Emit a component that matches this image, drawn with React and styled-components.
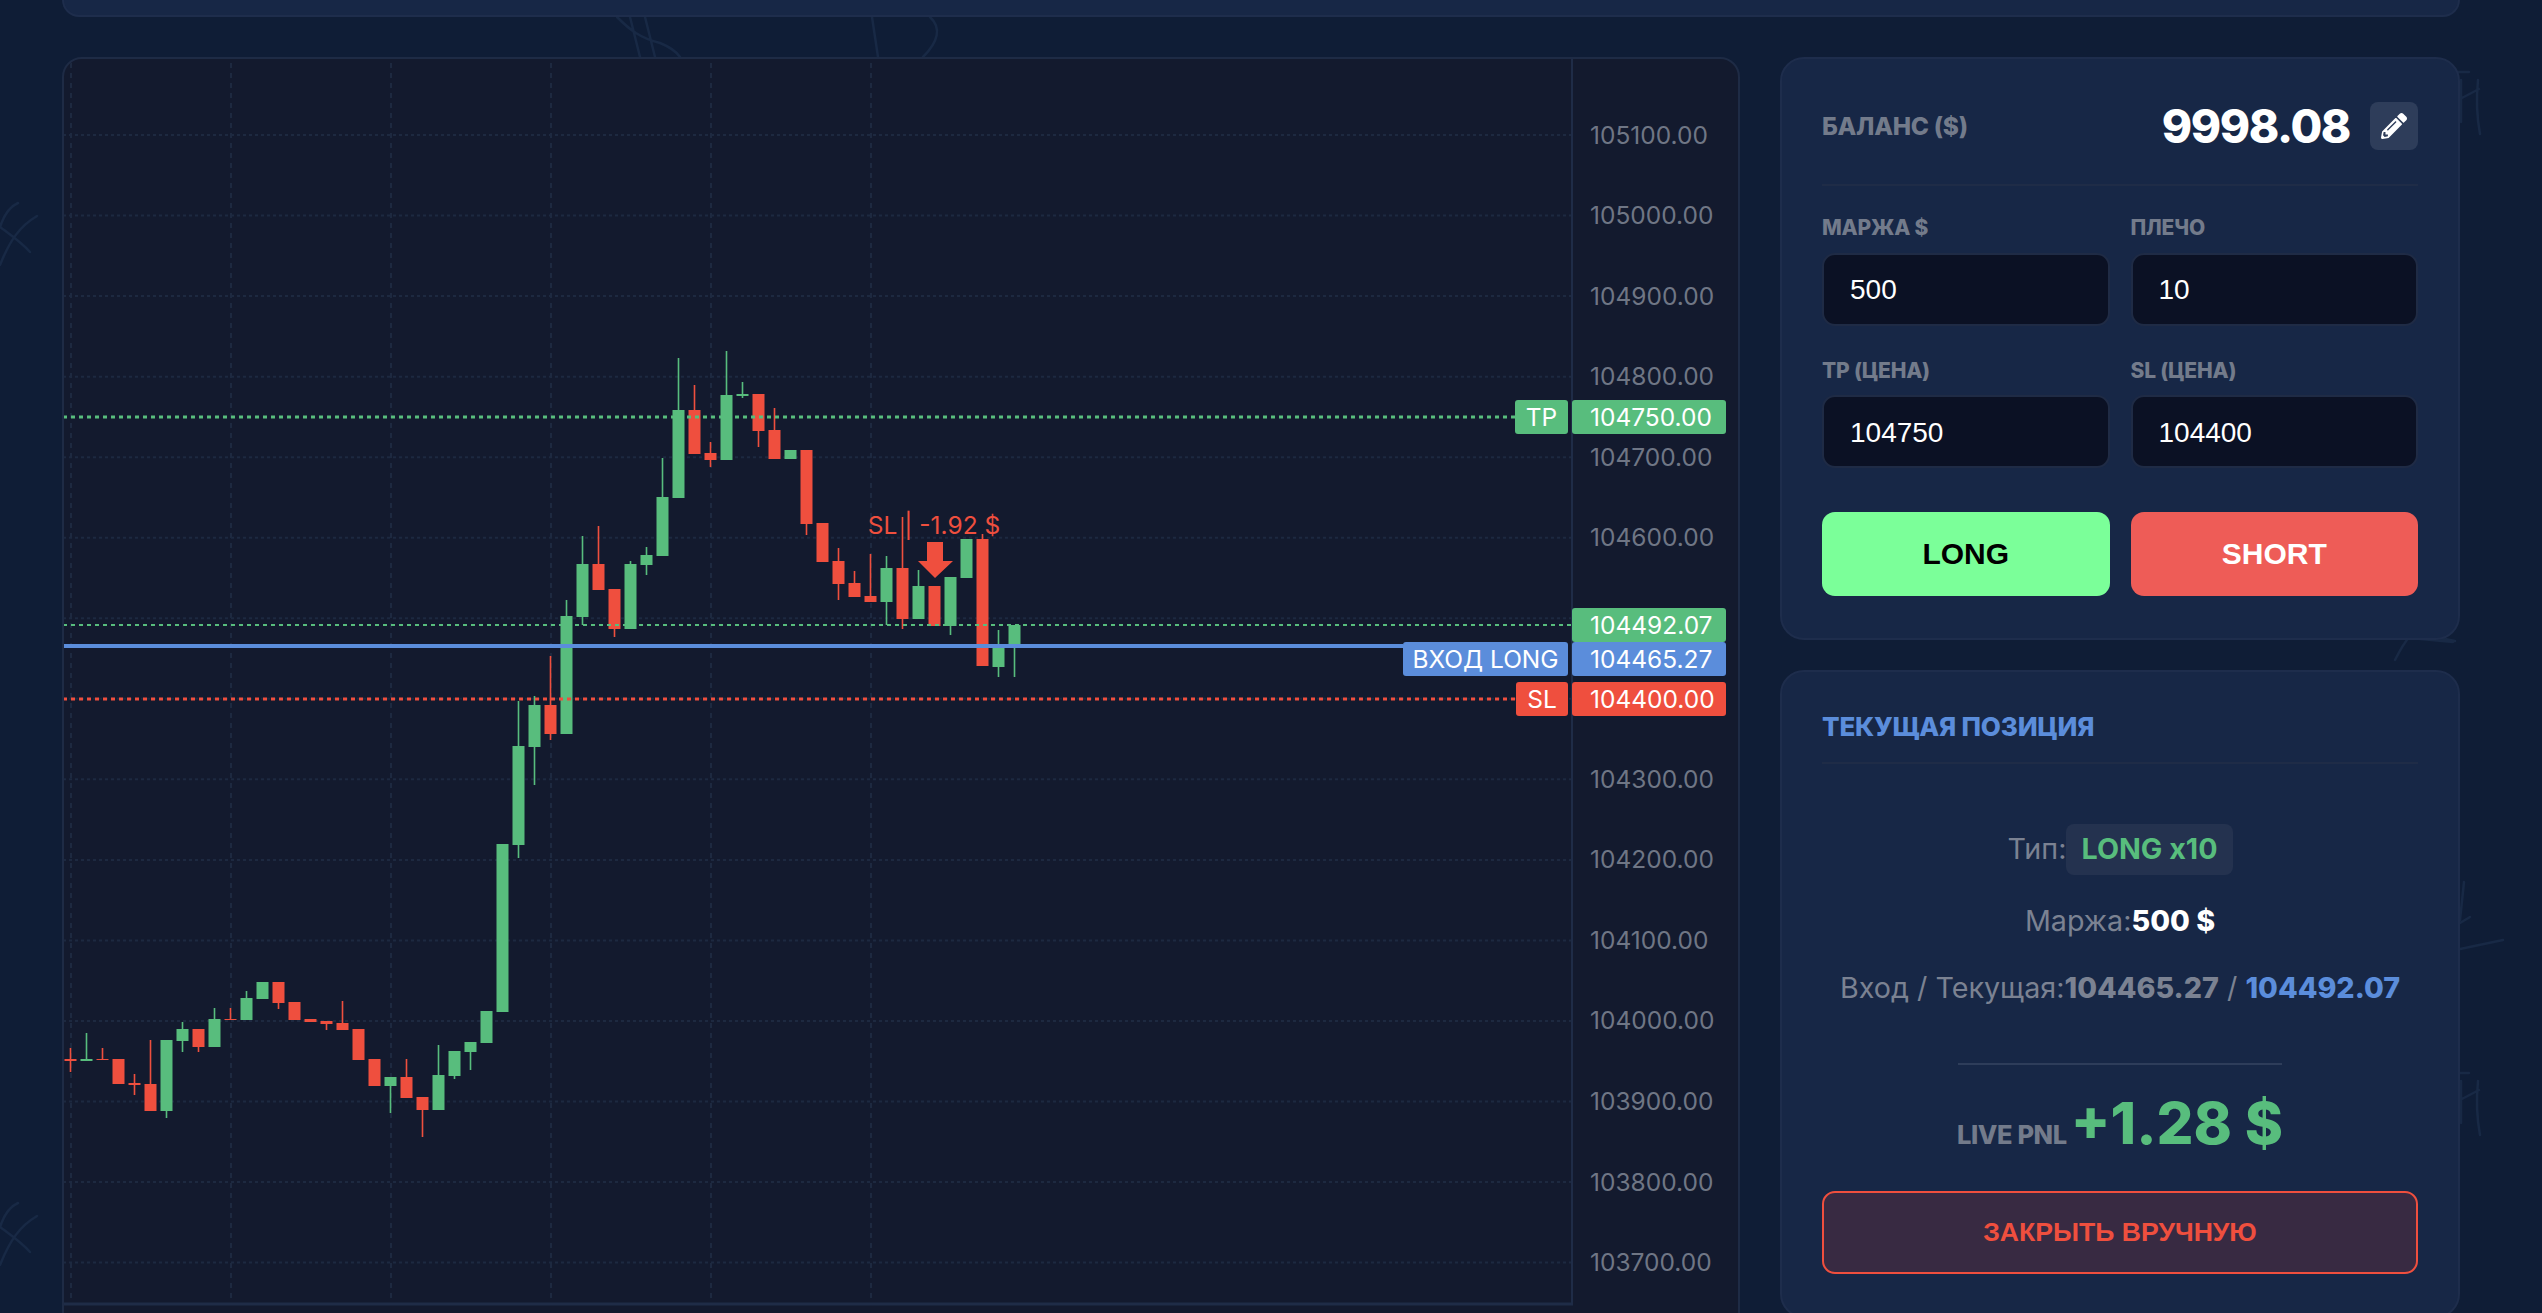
import React from 'react';
import styled, { createGlobalStyle } from 'styled-components';
import { FaPencilAlt } from 'react-icons/fa';

const UP = '#58bd7d';
const DOWN = '#ef4f3e';
const BLUE = '#5b8ddb';
const GRID = '#1d2940';
const AXIS = '#6f7685';

// [colour, bodyTop, bodyBottom, wickTop, wickBottom], x follows from the index
const CANDLES = [
  ['d', 1058, 1060, 1047, 1071], ['u', 1058, 1060, 1032, 1060], ['d', 1058, 1059, 1047, 1059],
  ['d', 1058, 1083], ['d', 1082, 1084, 1073, 1094], ['d', 1083, 1110, 1039, 1110],
  ['u', 1039, 1110, 1039, 1117], ['u', 1028, 1040, 1021, 1051], ['d', 1028, 1046, 1028, 1051],
  ['u', 1018, 1046, 1007, 1046], ['d', 1018, 1019, 1007, 1019], ['u', 997, 1019, 990, 1019],
  ['u', 981, 998], ['d', 981, 1002, 981, 1008], ['d', 1001, 1019], ['d', 1018, 1021],
  ['d', 1020, 1023, 1020, 1029], ['d', 1022, 1029, 1000, 1029], ['d', 1028, 1059], ['d', 1058, 1085],
  ['u', 1076, 1085, 1076, 1112], ['d', 1076, 1097, 1058, 1097], ['d', 1096, 1109, 1096, 1136],
  ['u', 1074, 1109, 1044, 1109], ['u', 1050, 1075, 1050, 1078], ['u', 1041, 1051, 1041, 1069],
  ['u', 1010, 1042], ['u', 843, 1011], ['u', 745, 844, 700, 857], ['u', 704, 746, 695, 784],
  ['d', 704, 733, 655, 739], ['u', 615, 733, 599, 733], ['u', 563, 616, 535, 624],
  ['d', 563, 589, 525, 589], ['d', 588, 628, 588, 636], ['u', 563, 628, 560, 628],
  ['u', 554, 564, 546, 574], ['u', 496, 555, 457, 555], ['u', 409, 497, 357, 497],
  ['d', 409, 453, 384, 453], ['d', 452, 459, 441, 466], ['u', 394, 459, 350, 459],
  ['u', 393, 395, 381, 397], ['d', 393, 430, 393, 446], ['d', 429, 458, 407, 458], ['u', 449, 458],
  ['d', 449, 523, 449, 534], ['d', 522, 561], ['d', 560, 583, 547, 599], ['d', 582, 596, 570, 596],
  ['d', 595, 601, 553, 601], ['u', 567, 601, 555, 624], ['d', 567, 618, 516, 628],
  ['u', 585, 618, 569, 618], ['d', 585, 625], ['u', 576, 625, 576, 634], ['u', 538, 577],
  ['d', 538, 665, 533, 665], ['u', 643, 666, 629, 676], ['u', 624, 647, 624, 676],
];

const PRICES = [105100, 105000, 104900, 104800, 104700, 104600, 104500, 104400, 104300, 104200, 104100, 104000, 103900, 103800, 103700];
const priceY = (p) => 697.8 + (104400 - p) * 0.8054;
const GRID_X = [70, 230, 390, 550, 710, 870];
const HIDDEN_TICKS = [104500, 104400];

const GlobalStyle = createGlobalStyle`
  html, body {
    margin: 0;
    height: 100%;
    overflow: hidden;
    background: #0f1d36;
  }
  body {
    font-family: Inter, 'Liberation Sans', sans-serif;
    color: #fff;
  }
  * {
    box-sizing: border-box;
  }
`;

const Page = styled.div`
  position: relative;
  height: 1313px;
  padding-left: 62px;
  overflow: hidden;
`;

const Doodles = styled.svg`
  position: absolute;
  inset: 0;
  fill: none;
  stroke: #182945;
  stroke-width: 2.5;
  stroke-linecap: round;
`;

const TopBar = styled.div`
  position: relative;
  width: 2398px;
  height: 17px;
  background: #172746;
  border: 2px solid #1e2d4c;
  border-top: 0;
  border-radius: 0 0 20px 20px;
`;

const Main = styled.main`
  position: relative;
  display: grid;
  grid-template-columns: 1678px 680px;
  column-gap: 40px;
  margin-top: 40px;
`;

const ChartCard = styled.section`
  height: 1340px;
  background: #131a2e;
  border: 2px solid #1e2b45;
  border-radius: 20px;
  overflow: hidden;
`;

const ChartSvg = styled.svg`
  display: block;
  margin: -2px;
  font-family: Inter, sans-serif;
  font-size: 24.5px;
`;

const Side = styled.aside`
  display: flex;
  flex-direction: column;
  gap: 30px;
`;

const Card = styled.section`
  padding: 39px 40px 42px;
  background: #172746;
  border: 2px solid #1e2d4c;
  border-radius: 24px;
`;

const BalanceRow = styled.div`
  display: flex;
  align-items: center;
  justify-content: space-between;
  padding-bottom: 30px;
  border-bottom: 2px solid #1f2c47;
`;

const BalanceLabel = styled.span`
  font-size: 24.5px;
  font-weight: 800;
  letter-spacing: -0.3px;
  color: #737b8b;
`;

const BalanceValue = styled.div`
  display: flex;
  align-items: center;
  gap: 20px;
  font-size: 46px;
  font-weight: 800;
  letter-spacing: -1.4px;
`;

const EditButton = styled.button`
  display: flex;
  align-items: center;
  justify-content: center;
  width: 48px;
  height: 48px;
  padding: 0;
  border: 0;
  border-radius: 8px;
  background: #2e3d5a;
  color: #fff;
  font-size: 26px;
`;

const FormGrid = styled.div`
  display: grid;
  grid-template-columns: 1fr 1fr;
  gap: 33px 21px;
  margin-top: 30px;
`;

const Field = styled.label`
  display: flex;
  flex-direction: column;
  gap: 12.5px;
  font-size: 21px;
  line-height: 24px;
  font-weight: 800;
  letter-spacing: -0.2px;
  color: #737b8b;
`;

const Input = styled.input`
  width: 100%;
  height: 73px;
  padding: 2px 26px 0;
  background: #0b1124;
  border: 2px solid #1f2b45;
  border-radius: 13px;
  color: #fff;
  font-family: 'Liberation Sans', Arial, sans-serif;
  font-size: 28px;
  outline: none;
`;

const Actions = styled.div`
  display: grid;
  grid-template-columns: 1fr 1fr;
  gap: 21px;
  margin-top: 43.5px;
`;

const TradeButton = styled.button`
  height: 84px;
  border: 0;
  border-radius: 13px;
  background: ${({ $side }) => ($side === 'long' ? '#7bff99' : '#ee5c57')};
  color: ${({ $side }) => ($side === 'long' ? '#000' : '#fff')};
  font-family: 'Liberation Sans', Arial, sans-serif;
  font-size: 30px;
  font-weight: 700;
`;

const PositionTitle = styled.h2`
  margin: 0;
  padding-bottom: 20px;
  border-bottom: 2px solid #1f2c47;
  font-size: 26px;
  line-height: 31px;
  font-weight: 800;
  letter-spacing: -0.2px;
  color: ${BLUE};
`;

const Rows = styled.div`
  display: flex;
  flex-direction: column;
  align-items: center;
  gap: 25px;
  margin-top: 60px;
`;

const Row = styled.div`
  display: flex;
  align-items: baseline;
  font-size: 28.7px;
  line-height: 42px;
  color: #7b8292;
`;

const Strong = styled.b`
  font-weight: 800;
  color: ${({ $color }) => $color || '#fff'};
`;

const TypeBadge = styled.span`
  padding: 4px 15px 5px;
  background: #24324f;
  border-radius: 8px;
  font-weight: 700;
  color: ${UP};
`;

const ShortRule = styled.hr`
  width: 324px;
  height: 2px;
  margin: 54px auto 0;
  border: 0;
  background: #2e3d5a;
`;

const PnlRow = styled.div`
  display: flex;
  align-items: baseline;
  justify-content: center;
  gap: 4px;
  margin-top: 23px;
`;

const PnlLabel = styled.span`
  font-size: 25.5px;
  font-weight: 800;
  letter-spacing: -0.4px;
  color: #737b8b;
`;

const PnlValue = styled.span`
  font-size: 58px;
  line-height: 70px;
  font-weight: 800;
  color: ${UP};
`;

const CloseButton = styled.button`
  display: block;
  width: 100%;
  height: 83px;
  margin-top: 33px;
  background: #382a42;
  border: 2.5px solid ${DOWN};
  border-radius: 13px;
  color: ${DOWN};
  font-family: 'Liberation Sans', Arial, sans-serif;
  font-size: 26.6px;
  font-weight: 700;
`;

function Candle({ index, data }) {
  const [tone, top, bottom, wickTop, wickBottom] = data;
  const color = tone === 'u' ? UP : DOWN;
  const x = 69.5 + index * 16;
  return (
    <g fill={color}>
      {wickTop !== undefined && <rect x={x - 0.8} y={wickTop} width="1.6" height={wickBottom - wickTop} />}
      <rect x={x - 6} y={top} width="12" height={bottom - top} />
    </g>
  );
}

function PriceTag({ top, bottom, color, value, label, labelX }) {
  return (
    <g>
      <rect x="1571" y={top} width="154" height={bottom - top} rx="3" fill={color} />
      <text x="1589" y={(top + bottom) / 2 + 8.5} fill="#fff">{value}</text>
      {label && (
        <>
          <rect x={labelX} y={top} width={1567 - labelX} height={bottom - top} rx="3" fill={color} />
          <text x={(labelX + 1567) / 2} y={(top + bottom) / 2 + 8.5} fill="#fff" textAnchor="middle">{label}</text>
        </>
      )}
    </g>
  );
}

function Chart() {
  return (
    <ChartCard>
      <ChartSvg width="1678" height="1340" viewBox="61 56 1678 1340">
        <g stroke={GRID} strokeWidth="2" strokeDasharray="3 3">
          {PRICES.map((p) => (
            <line key={p} x1="62" x2="1571" y1={priceY(p)} y2={priceY(p)} />
          ))}
          {GRID_X.map((x) => (
            <line key={x} x1={x} x2={x} y1="62" y2="1303" strokeDasharray="5 5" />
          ))}
        </g>
        <line x1="1571" x2="1571" y1="57" y2="1304" stroke="#1f2c47" strokeWidth="2" />
        <line x1="60" x2="1572" y1="1303" y2="1303" stroke="#1f2c47" strokeWidth="3" />
        {CANDLES.map((c, i) => (
          <Candle key={i} index={i} data={c} />
        ))}
        <path d="M926 541h16v19h10l-18 17-17-17h9z" fill={DOWN} />
        <text x="933" y="533" fill={DOWN} textAnchor="middle">SL | -1.92 $</text>
        <line x1="62" x2="1514" y1="416" y2="416" stroke={UP} strokeWidth="3.2" strokeDasharray="4 4" />
        <line x1="62" x2="1571" y1="624" y2="624" stroke={UP} strokeWidth="2" strokeDasharray="4 4" />
        <line x1="62" x2="1402" y1="645" y2="645" stroke={BLUE} strokeWidth="4" />
        <line x1="62" x2="1515" y1="698" y2="698" stroke={DOWN} strokeWidth="3.2" strokeDasharray="4 4" />
        <g fill={AXIS}>
          {PRICES.filter((p) => !HIDDEN_TICKS.includes(p)).map((p) => (
            <text key={p} x="1589" y={priceY(p) + 8.5}>{p}.00</text>
          ))}
        </g>
        <PriceTag top={399} bottom={433} color={UP} value="104750.00" label="TP" labelX={1514} />
        <PriceTag top={607} bottom={641} color={UP} value="104492.07" />
        <PriceTag top={641} bottom={675} color={BLUE} value="104465.27" label="ВХОД LONG" labelX={1402} />
        <PriceTag top={681} bottom={715} color={DOWN} value="104400.00" label="SL" labelX={1515} />
      </ChartSvg>
    </ChartCard>
  );
}

function BackgroundScribbles() {
  return (
    <Doodles width="2542" height="1313" viewBox="0 0 2542 1313">
      <path d="M0 227C3 218 9 207 18 203M0 265C10 240 20 226 37 216M0 227C12 236 22 243 30 252" />
      <path d="M0 1227C3 1218 9 1207 18 1203M0 1265C10 1240 20 1226 37 1216M0 1227C12 1236 22 1243 30 1252" />
      <path d="M617 17C630 30 640 38 660 43C670 47 676 51 680 57M630 17L640 57M645 17L655 57" />
      <path d="M872 17L878 57M930 17C942 28 938 42 923 57" />
      <path d="M2458 72H2469M2461 80V122M2478 80C2476 100 2477 118 2480 134M2460 99L2479 89" />
      <path d="M2458 1073H2469M2461 1081V1123M2478 1081C2476 1101 2477 1119 2480 1135M2460 1100L2479 1090" />
      <path d="M2464 882L2460 920M2460 923L2470 917M2460 949L2503 940" />
      <path d="M2440 638L2455 641M2395 660C2400 650 2404 643 2410 636M2410 638L2453 642" />
    </Doodles>
  );
}

export default function App() {
  return (
    <>
      <GlobalStyle />
      <Page>
        <BackgroundScribbles />
        <TopBar />
        <Main>
          <Chart />
          <Side>
            <Card>
              <BalanceRow>
                <BalanceLabel>БАЛАНС ($)</BalanceLabel>
                <BalanceValue>
                  9998.08
                  <EditButton aria-label="edit">
                    <FaPencilAlt />
                  </EditButton>
                </BalanceValue>
              </BalanceRow>
              <FormGrid>
                <Field>
                  МАРЖА $
                  <Input readOnly value="500" />
                </Field>
                <Field>
                  ПЛЕЧО
                  <Input readOnly value="10" />
                </Field>
                <Field>
                  TP (ЦЕНА)
                  <Input readOnly value="104750" />
                </Field>
                <Field>
                  SL (ЦЕНА)
                  <Input readOnly value="104400" />
                </Field>
              </FormGrid>
              <Actions>
                <TradeButton $side="long">LONG</TradeButton>
                <TradeButton $side="short">SHORT</TradeButton>
              </Actions>
            </Card>
            <Card>
              <PositionTitle>ТЕКУЩАЯ ПОЗИЦИЯ</PositionTitle>
              <Rows>
                <Row>
                  Тип:<TypeBadge>LONG x10</TypeBadge>
                </Row>
                <Row>
                  Маржа:<Strong>500 $</Strong>
                </Row>
                <Row>
                  Вход / Текущая:<Strong $color="#7b8292">104465.27</Strong>&nbsp;/&nbsp;<Strong $color={BLUE}>104492.07</Strong>
                </Row>
              </Rows>
              <ShortRule />
              <PnlRow>
                <PnlLabel>LIVE PNL</PnlLabel>
                <PnlValue>+1.28 $</PnlValue>
              </PnlRow>
              <CloseButton>ЗАКРЫТЬ ВРУЧНУЮ</CloseButton>
            </Card>
          </Side>
        </Main>
      </Page>
    </>
  );
}
